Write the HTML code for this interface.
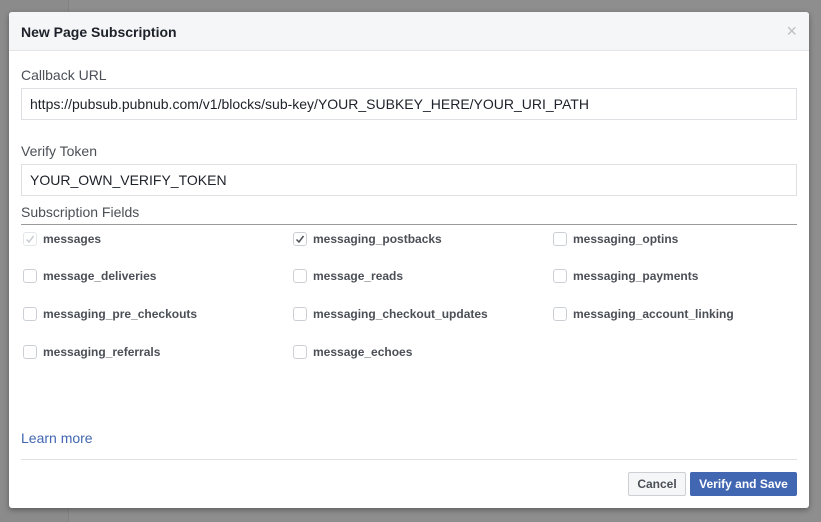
<!DOCTYPE html>
<html><head><meta charset="utf-8"><style>
*{box-sizing:border-box;margin:0;padding:0}
body{width:821px;height:522px;overflow:hidden;background:#8e8e8e;font-family:"Liberation Sans",Helvetica,Arial,sans-serif;position:relative}
.lc{position:absolute;left:0;top:0;width:69px;height:522px;background:#8b8b8b;border-right:1px solid #838383}
.dlg{position:absolute;left:9px;top:12px;width:800px;height:496px;background:#fff;border-radius:3px;box-shadow:0 2px 6px rgba(0,0,0,.35);overflow:hidden}
.hd{height:39px;background:#f5f6f7;border-bottom:1px solid #e5e5e5;padding:0 12px;font-weight:bold;font-size:14px;color:#1d2129;line-height:40px}
.x{position:absolute;right:12px;top:10px;color:#bcc0c4;font-size:18px;line-height:18px}
.lbl{position:absolute;left:12px;font-size:14px;color:#4b4f56}
.inp{position:absolute;left:12px;width:776px;height:32px;border:1px solid #dddfe2;font-size:14px;color:#1d2129;padding-left:8px;line-height:30px}
.rule{position:absolute;left:12px;width:776px;height:1px;background:#9a9a9a}
.cb{position:absolute;width:14px;height:14px;border:1px solid #ccd0d5;border-radius:3px;background:#fff}
.cb svg{position:absolute;left:1px;top:1px}
.t{position:absolute;font-size:12px;font-weight:bold;color:#4b4f56;line-height:14px}
.lm{position:absolute;left:12px;top:418px;font-size:14px;color:#4267b2}
.fl{position:absolute;left:12px;top:447px;width:776px;height:1px;background:#dddfe2}
.btn{position:absolute;top:460px;height:24px;font-size:12px;font-weight:bold;line-height:22px;text-align:center;border-radius:2px}
</style></head><body>
<div class="lc"></div>
<div class="dlg">
<div class="hd">New Page Subscription</div>
<div class="x">×</div>
<div class="lbl" style="top:55px">Callback URL</div>
<div class="inp" style="top:76px">https://pubsub.pubnub.com/v1/blocks/sub-key/YOUR_SUBKEY_HERE/YOUR_URI_PATH</div>
<div class="lbl" style="top:131px">Verify Token</div>
<div class="inp" style="top:152px">YOUR_OWN_VERIFY_TOKEN</div>
<div class="lbl" style="top:192px">Subscription Fields</div>
<div class="rule" style="top:212px"></div>

<div class="cb" style="left:14px;top:220px;border-color:#e4e6e9"><svg width="10" height="10"><path d="M1.5 5.5L4 8L8.5 2" stroke="#c8ccd1" stroke-width="1.5" fill="none"/></svg></div>
<div class="t" style="left:34px;top:220px">messages</div>
<div class="cb" style="left:284px;top:220px"><svg width="10" height="10"><path d="M1.5 5.5L4 8L8.5 2" stroke="#4b4f56" stroke-width="1.5" fill="none"/></svg></div>
<div class="t" style="left:304px;top:220px">messaging_postbacks</div>
<div class="cb" style="left:544px;top:220px"></div>
<div class="t" style="left:564px;top:220px">messaging_optins</div>

<div class="cb" style="left:14px;top:257px"></div>
<div class="t" style="left:34px;top:257px">message_deliveries</div>
<div class="cb" style="left:284px;top:257px"></div>
<div class="t" style="left:304px;top:257px">message_reads</div>
<div class="cb" style="left:544px;top:257px"></div>
<div class="t" style="left:564px;top:257px">messaging_payments</div>

<div class="cb" style="left:14px;top:295px"></div>
<div class="t" style="left:34px;top:295px">messaging_pre_checkouts</div>
<div class="cb" style="left:284px;top:295px"></div>
<div class="t" style="left:304px;top:295px">messaging_checkout_updates</div>
<div class="cb" style="left:544px;top:295px"></div>
<div class="t" style="left:564px;top:295px">messaging_account_linking</div>

<div class="cb" style="left:14px;top:333px"></div>
<div class="t" style="left:34px;top:333px">messaging_referrals</div>
<div class="cb" style="left:284px;top:333px"></div>
<div class="t" style="left:304px;top:333px">message_echoes</div>

<div class="lm">Learn more</div>
<div class="fl"></div>
<div class="btn" style="left:619px;width:58px;background:#f5f6f7;border:1px solid #ccd0d5;color:#4b4f56">Cancel</div>
<div class="btn" style="left:681px;width:107px;background:#4267b2;border:1px solid #4267b2;color:#fff">Verify and Save</div>
</div>
</body></html>
